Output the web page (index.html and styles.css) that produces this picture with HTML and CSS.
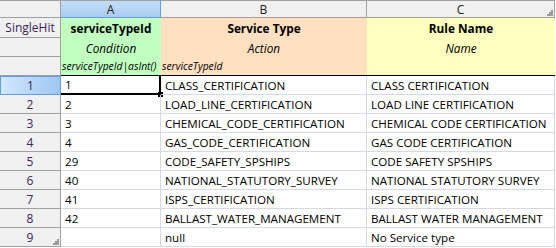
FILE: index.html
```html
<!DOCTYPE html>
<html>
<head>
<meta charset="utf-8">
<link rel="stylesheet" href="styles.css">
</head>
<body>
<div class="sheet">
  <div class="hd corner"></div>
  <div class="hd col sel">A</div>
  <div class="hd col">B</div>
  <div class="hd col last">C<svg class="grip" width="7" height="7" viewBox="0 0 7 7"><rect x="5" y="1" width="2" height="2"/><rect x="3" y="3" width="2" height="2"/><rect x="5" y="3" width="2" height="2"/><rect x="1" y="5" width="2" height="2"/><rect x="3" y="5" width="2" height="2"/><rect x="5" y="5" width="2" height="2"/></svg></div>

  <div class="hd rowh meta-first">SingleHit</div>
  <div class="m cond title">serviceTypeId</div>
  <div class="m act title">Service Type</div>
  <div class="m name title">Rule Name</div>

  <div class="hd rowh"></div>
  <div class="m cond kind">Condition</div>
  <div class="m act kind">Action</div>
  <div class="m name kind">Name</div>

  <div class="hd rowh"></div>
  <div class="m cond expr edge">serviceTypeId|asInt()</div>
  <div class="m act expr edge">serviceTypeId</div>
  <div class="m name expr edge"></div>

  <div class="hd rowh selrow">1</div>
  <div class="c selcell">1<span class="handle"></span></div>
  <div class="c">CLASS_CERTIFICATION</div>
  <div class="c">CLASS CERTIFICATION</div>

  <div class="hd rowh">2</div>
  <div class="c">2</div>
  <div class="c">LOAD_LINE_CERTIFICATION</div>
  <div class="c">LOAD LINE CERTIFICATION</div>

  <div class="hd rowh">3</div>
  <div class="c">3</div>
  <div class="c">CHEMICAL_CODE_CERTIFICATION</div>
  <div class="c">CHEMICAL CODE CERTIFICATION</div>

  <div class="hd rowh">4</div>
  <div class="c">4</div>
  <div class="c">GAS_CODE_CERTIFICATION</div>
  <div class="c">GAS CODE CERTIFICATION</div>

  <div class="hd rowh">5</div>
  <div class="c">29</div>
  <div class="c">CODE_SAFETY_SPSHIPS</div>
  <div class="c">CODE SAFETY SPSHIPS</div>

  <div class="hd rowh">6</div>
  <div class="c">40</div>
  <div class="c">NATIONAL_STATUTORY_SURVEY</div>
  <div class="c">NATIONAL STATUTORY SURVEY</div>

  <div class="hd rowh">7</div>
  <div class="c">41</div>
  <div class="c">ISPS_CERTIFICATION</div>
  <div class="c">ISPS CERTIFICATION</div>

  <div class="hd rowh">8</div>
  <div class="c">42</div>
  <div class="c">BALLAST_WATER_MANAGEMENT</div>
  <div class="c">BALLAST WATER MANAGEMENT</div>

  <div class="hd rowh lastrow">9<svg class="grip" width="7" height="7" viewBox="0 0 7 7"><rect x="5" y="1" width="2" height="2"/><rect x="3" y="3" width="2" height="2"/><rect x="5" y="3" width="2" height="2"/><rect x="1" y="5" width="2" height="2"/><rect x="3" y="5" width="2" height="2"/><rect x="5" y="5" width="2" height="2"/></svg></div>
  <div class="c"></div>
  <div class="c">null</div>
  <div class="c">No Service type</div>
</div>
</body>
</html>
```

FILE: styles.css
```css
html, body {
  margin: 0;
  padding: 0;
  background: #ffffff;
}

.sheet {
  display: grid;
  grid-template-columns: 61px 100px 206px 188px;
  grid-template-rows: 18px 20px 19px 19px repeat(9, 19px);
  font-family: "Open Sans", "Noto Sans", "DejaVu Sans", sans-serif;
  font-size: 11.6px;
  color: #000;
  width: 555px;
}

.sheet > div {
  box-sizing: border-box;
  position: relative;
  white-space: nowrap;
  overflow: visible;
}

.hd {
  background: #f0f0f0;
  border-right: 1px solid #a0a0a0;
  border-bottom: 1px solid #a0a0a0;
  display: flex;
  align-items: center;
  justify-content: center;
}

.col {
  border-top: 1px solid #a0a0a0;
  color: #222;
  font-size: 12px;
}

.corner {
  border-top: 1px solid #a0a0a0;
}

.col.sel {
  background: linear-gradient(to bottom, #c4def8, #a9ccf3);
  border-bottom: 1px solid #5f9fe4;
  border-right: 1px solid #5f9fe4;
}

.rowh {
  color: #3a2659;
  font-size: 12px;
}

.selrow {
  background: linear-gradient(to right, #d3e7fc, #9fc7f2);
  border: 1px solid #5f9fe4;
}

.grip {
  position: absolute;
  right: 1px;
  bottom: 1px;
  fill: #9a9a9a;
}

.m {
  display: flex;
  align-items: center;
}

.cond { background: #c0ffc0; }
.act { background: #ffe0c0; }
.name { background: #ffffc0; }

.title {
  justify-content: center;
  font-weight: bold;
  font-size: 11.8px;
}

.kind {
  justify-content: center;
  font-style: italic;
  font-size: 11.8px;
}

.expr {
  font-style: italic;
  font-size: 10.3px;
  padding-left: 1px;
}

.edge {
  border-bottom: 1px solid #000;
}

.c {
  border-right: 1px solid #d4dae5;
  border-bottom: 1px solid #d4dae5;
  padding-left: 4px;
  display: flex;
  align-items: center;
}

.selcell {
  border-right: 2px solid #000;
  border-bottom: 2px solid #000;
}

.handle {
  position: absolute;
  right: -4px;
  bottom: -4px;
  width: 5px;
  height: 5px;
  background: #000;
}
```
